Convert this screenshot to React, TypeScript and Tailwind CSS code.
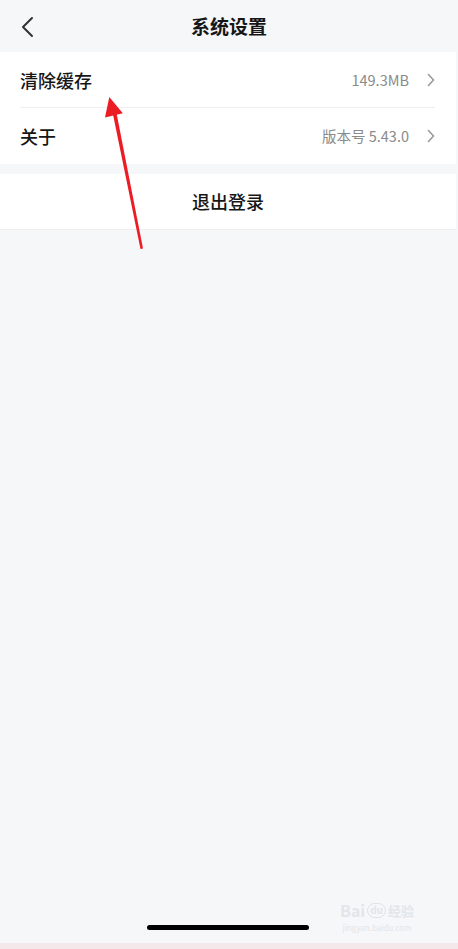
const FONT = { fontFamily: '"Noto Sans CJK SC", "Noto Sans", sans-serif' };

function Chevron() {
  return (
    <svg width="8" height="14" viewBox="0 0 8 14" className="ml-[18px]">
      <path d="M1.5 1.5 L6.5 7 L1.5 12.5" fill="none" stroke="#9a9a9a" strokeWidth="1.6" strokeLinecap="round" strokeLinejoin="round" />
    </svg>
  );
}

function Row({ label, value, divider }: { label: string; value: string; divider?: boolean }) {
  return (
    <div className="relative flex h-[56px] items-center pl-5 pr-[21px]">
      <span className="flex-1 text-[18px] font-medium text-[#161616]">{label}</span>
      <span className="text-[14.5px] text-[#8a8a8a]">{value}</span>
      <Chevron />
      {divider && <div className="absolute bottom-0 left-5 right-[21px] h-px bg-[#efefef]" />}
    </div>
  );
}

export default function App() {
  return (
    <div className="relative flex h-[949px] w-[458px] flex-col overflow-hidden bg-[#f6f7f9]" style={FONT}>
      {/* header */}
      <div className="relative flex h-[52px] items-center justify-center">
        <svg width="14" height="24" viewBox="0 0 14 24" className="absolute left-[20px] top-[16px]">
          <path d="M12 2 L3 11 L12 20" fill="none" stroke="#333" strokeWidth="2" strokeLinecap="round" strokeLinejoin="round" />
        </svg>
        <span className="text-[19px] font-bold text-[#161616]">系统设置</span>
      </div>

      <div className="mr-[2px] bg-white">
        <Row label="清除缓存" value="149.3MB" divider />
        <Row label="关于" value="版本号 5.43.0" />
      </div>

      <div className="mr-[2px] mt-[10px] flex h-[56px] items-center justify-center border-b border-[#efefef] bg-white">
        <span className="text-[18px] font-medium text-[#161616]">退出登录</span>
      </div>

      <div className="flex-1" />

      {/* home indicator + watermark */}
      <div className="relative h-[48px]">
        <div className="absolute left-[147px] top-[30px] h-[5px] w-[162px] rounded-full bg-black" />
        <div className="absolute left-[340px] top-[6px] flex flex-col items-center text-[#e3e5e9]">
          <div className="flex h-[18px] items-center gap-[2px] text-[16px] font-bold leading-none">
            <span>Bai</span>
            <span className="flex h-[15px] items-center rounded-full border border-[#dfe1e5] px-[2px] text-[10px] leading-none">du</span>
            <span className="text-[13px]">经验</span>
          </div>
          <span className="mt-[5px] text-[8px] leading-none">jingyan.baidu.com</span>
        </div>
      </div>
      <div className="h-[6px] bg-[#f5e8eb]" />

      {/* red annotation arrow */}
      <svg className="pointer-events-none absolute left-0 top-0" width="458" height="260" viewBox="0 0 458 260">
        <polygon points="140.5,249 143,248.5 116.5,113 113,114.5" fill="#ec1c24" />
        <polygon points="109.3,97 105,117.5 122.8,113.3" fill="#ec1c24" />
      </svg>
    </div>
  );
}
